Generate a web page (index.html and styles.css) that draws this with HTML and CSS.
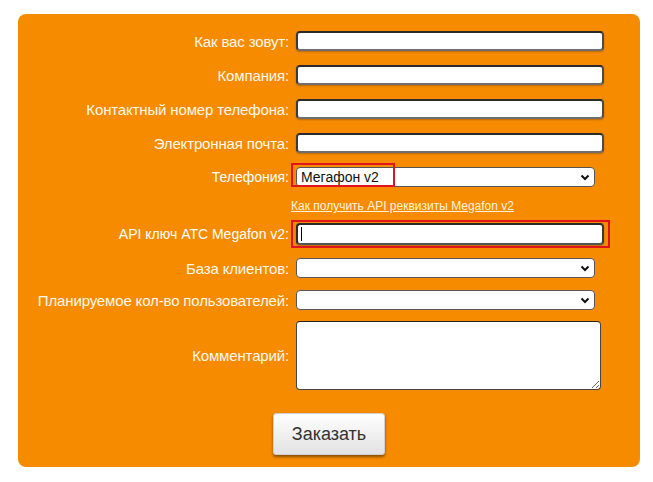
FILE: index.html
```html
<!DOCTYPE html>
<html lang="ru">
<head>
<meta charset="utf-8">
<title>Заявка</title>
<link rel="stylesheet" href="styles.css">
</head>
<body>
<form class="card">
  <div class="row">
    <label class="lbl narrow">Как вас зовут:</label>
    <input class="inp" type="text">
  </div>
  <div class="row">
    <label class="lbl narrow">Компания:</label>
    <input class="inp" type="text">
  </div>
  <div class="row">
    <label class="lbl narrow">Контактный номер телефона:</label>
    <input class="inp" type="text">
  </div>
  <div class="row">
    <label class="lbl narrow">Электронная почта:</label>
    <input class="inp" type="text">
  </div>
  <div class="row r5">
    <label class="lbl">Телефония:</label>
    <div class="selwrap">
      <select class="sel"><option>Мегафон v2</option></select>
      <svg class="chev" width="10" height="7" viewBox="0 0 10 7"><path d="M1.5 1.5 L5 5 L8.5 1.5" fill="none" stroke="#111" stroke-width="2"/></svg>
      <span class="mark"></span>
    </div>
  </div>
  <div class="row linkrow">
    <span class="lbl"></span>
    <a class="help" href="#">Как получить API реквизиты Megafon v2</a>
  </div>
  <div class="row r6">
    <label class="lbl">API ключ АТС Megafon v2:</label>
    <div class="apiwrap">
      <input class="inp api" type="text">
      <span class="caret"></span>
      <span class="mark2"></span>
    </div>
  </div>
  <div class="row r7">
    <label class="lbl narrow">База клиентов:</label>
    <div class="selwrap">
      <select class="sel"><option></option></select>
      <svg class="chev" width="10" height="7" viewBox="0 0 10 7"><path d="M1.5 1.5 L5 5 L8.5 1.5" fill="none" stroke="#111" stroke-width="2"/></svg>
    </div>
  </div>
  <div class="row r8">
    <label class="lbl narrow">Планируемое кол-во пользователей:</label>
    <div class="selwrap">
      <select class="sel"><option></option></select>
      <svg class="chev" width="10" height="7" viewBox="0 0 10 7"><path d="M1.5 1.5 L5 5 L8.5 1.5" fill="none" stroke="#111" stroke-width="2"/></svg>
    </div>
  </div>
  <div class="row r9">
    <label class="lbl narrow">Комментарий:</label>
    <textarea class="ta"></textarea>
  </div>
  <div class="btnrow">
    <button class="btn" type="button">Заказать</button>
  </div>
</form>
</body>
</html>
```
FILE: styles.css
```css
html, body {
  margin: 0;
  padding: 0;
  background: #fff;
}
body {
  font-family: "Liberation Sans", Arial, sans-serif;
}
.card {
  box-sizing: border-box;
  margin: 14px 0 0 18px;
  width: 622px;
  height: 453px;
  background: #f78b00;
  border-radius: 8px;
  padding-top: 17px;
  display: flex;
  flex-direction: column;
}
.row {
  display: flex;
  align-items: center;
  gap: 7px;
  height: 20px;
  margin-bottom: 14px;
}
.lbl {
  width: 271px;
  flex: none;
  text-align: right;
  color: #fff;
  font-size: 14px;
  white-space: nowrap;
}
.narrow {
  font-family: "Liberation Sans Narrow", "Arial Narrow", "Liberation Sans", sans-serif;
  font-size: 15px;
  letter-spacing: -0.15px;
  color: #fff8ec;
}
.inp {
  box-sizing: border-box;
  width: 308px;
  height: 20px;
  border: 2px solid;
  border-color: #2a2a2a #4a4a4a #6e6e6e #3a3a3a;
  border-radius: 4px;
  background: #fff;
  padding: 0 4px;
  box-shadow: 0 1px 2px rgba(0,0,0,0.25);
  font: 14px "Liberation Sans", Arial, sans-serif;
}
.r5 { margin-bottom: 0; }
.selwrap {
  position: relative;
  width: 299px;
  height: 20px;
}
.sel {
  appearance: none;
  -webkit-appearance: none;
  box-sizing: border-box;
  width: 299px;
  height: 20px;
  border: 1px solid #555;
  border-radius: 4px;
  background: #fff;
  padding: 0 0 0 4px;
  font: 14px "Liberation Sans", Arial, sans-serif;
  color: #111;
}
.chev {
  position: absolute;
  right: 5px;
  top: 7px;
}
.mark {
  position: absolute;
  left: -5px;
  top: -4px;
  width: 100px;
  height: 20px;
  border: 2px solid #e0141c;
}
.linkrow {
  height: 14px;
  margin-top: 12px;
  margin-bottom: 10px;
}
.help {
  margin-left: -5px;
  color: #fff3dc;
  font-size: 12px;
  text-decoration: underline;
}
.r6 { height: 22px; margin-bottom: 13px; }
.apiwrap {
  position: relative;
  width: 308px;
  height: 22px;
}
.api {
  height: 22px;
  border-color: #2a2a2a #3a3a3a #555 #2a2a2a;
}
.caret {
  position: absolute;
  left: 5px;
  top: 4px;
  width: 1px;
  height: 14px;
  background: #000;
}
.mark2 {
  position: absolute;
  box-sizing: border-box;
  left: -5px;
  top: -3px;
  width: 319px;
  height: 28px;
  border: 2px solid #e0141c;
}
.r7 { height: 20px; margin-bottom: 12px; }
.r8 { height: 20px; margin-bottom: 11px; }
.r9 {
  height: 69px;
  margin-bottom: 23px;
}
.ta {
  box-sizing: border-box;
  width: 305px;
  height: 69px;
  border: 1px solid #444;
  border-top-color: #222;
  border-radius: 4px;
  background: #fff;
  resize: vertical;
}
.btnrow {
  padding-left: 255px;
}
.btn {
  box-sizing: border-box;
  width: 112px;
  height: 42px;
  border: 1px solid #d0d0d0;
  border-radius: 3px;
  background: linear-gradient(#ffffff, #e2e2e2);
  box-shadow: 0 2px 3px rgba(0,0,0,0.45);
  font: 18px "Liberation Sans", Arial, sans-serif;
  color: #333;
  padding: 0;
}
```
